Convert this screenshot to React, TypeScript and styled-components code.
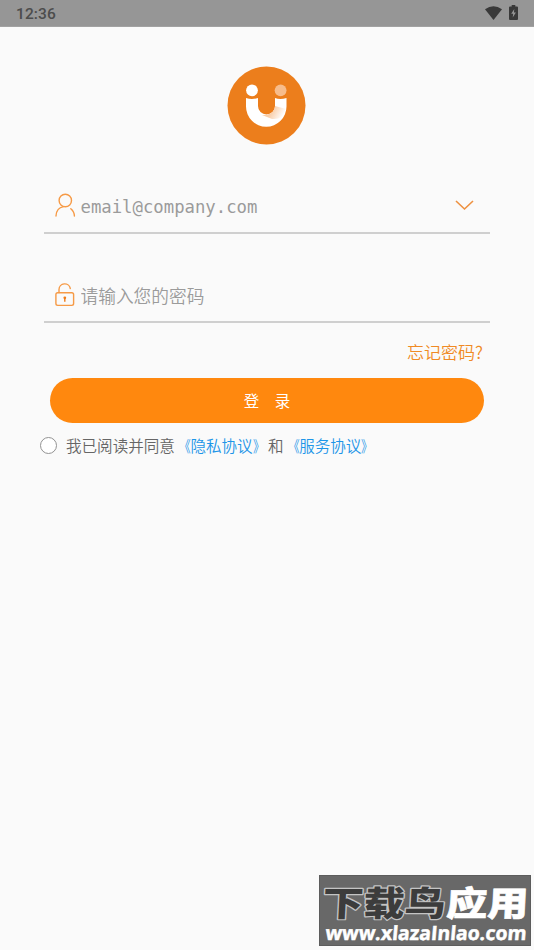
import React from 'react';
import styled, { createGlobalStyle } from 'styled-components';

const GlobalStyle = createGlobalStyle`
  * { box-sizing: border-box; }
  body { margin: 0; background: #fafafa; }
`;

const Screen = styled.div`
  position: relative;
  width: 534px;
  height: 950px;
  overflow: hidden;
  display: flex;
  flex-direction: column;
  background: #fafafa;
  font-family: 'Noto Sans CJK SC', sans-serif;
`;

const StatusBar = styled.header`
  height: 27px;
  flex: none;
  display: flex;
  align-items: center;
  justify-content: space-between;
  padding: 1px 16px 0 16px;
  background: #969696;
  border-bottom: 1px solid #a2a2a2;
`;

const Clock = styled.span`
  font: 500 15.5px/20px Roboto, sans-serif;
  letter-spacing: 0.1px;
  color: #4c4c4c;
`;

const StatusIcons = styled.div`
  display: flex;
  align-items: center;
  gap: 7px;
  margin-top: -2px;
  svg { display: block; }
`;

const LogoWrap = styled.div`
  display: flex;
  justify-content: center;
  height: 151px;
  padding: 39px 1px 0 0;
  svg { display: block; }
`;

const Field = styled.label<{ $height: number }>`
  display: flex;
  align-items: flex-end;
  height: ${(p) => p.$height}px;
  margin: 0 44px;
  padding: 0 16px 12px 10px;
  border-bottom: 2px solid #cfcfcf;
  svg { display: block; flex: none; }
`;

const Input = styled.input<{ $mono?: boolean }>`
  flex: 1;
  min-width: 0;
  height: 24px;
  margin: 0 0 ${(p) => (p.$mono ? 1 : 2)}px 3.500px;
  padding: 0;
  border: 0;
  outline: 0;
  background: transparent;
  font-family: ${(p) => (p.$mono ? "'DejaVu Sans Mono', monospace" : "'Noto Sans CJK SC', sans-serif")};
  font-size: ${(p) => (p.$mono ? 17.3 : 17.7)}px;
  font-weight: ${(p) => (p.$mono ? 400 : 350)};
  color: #666;
  &::placeholder { color: #9b9b9b; opacity: 1; }
`;

const Forgot = styled.a`
  align-self: flex-end;
  margin: 16px 51px 0 0;
  height: 39px;
  font-size: 17px;
  font-weight: 350;
  line-height: 26px;
  color: #f08a24;
`;

const LoginButton = styled.button`
  flex: none;
  height: 45px;
  margin: 0 50px 0 50px;
  padding: 0;
  border: 0;
  border-radius: 23px;
  background: #ff880e;
  color: #fff;
  font: 400 15.5px/45px 'Noto Sans CJK SC', sans-serif;
`;

const Agreement = styled.div`
  display: flex;
  align-items: center;
  height: 44px;
  padding-left: 40px;
`;

const Radio = styled.span`
  width: 17px;
  height: 17px;
  margin-right: 9px;
  border: 1px solid #929292;
  border-radius: 50%;
  background: #fff;
`;

const AgreementText = styled.span`
  font-size: 15.55px;
  font-weight: 350;
  line-height: 24px;
  white-space: nowrap;
  color: #666;
`;

const Link = styled.a`
  color: #1e96e8;
`;

const Bracket = styled.span<{ $side: 'left' | 'right' }>`
  display: inline-block;
  transform: scaleX(0.75);
  transform-origin: ${(p) => (p.$side === 'left' ? 'right' : 'left')} center;
`;

const Watermark = styled.div`
  position: absolute;
  left: 319px;
  top: 875px;
  width: 212px;
  height: 71px;
  background: #686868;
  border: 1px solid #5c5c5c;
  svg { display: block; }
`;

const Logo = () => (
  <svg width="79" height="79" viewBox="0 0 79 79">
    <defs>
      <linearGradient id="fold" x1="44" y1="46" x2="55" y2="52" gradientUnits="userSpaceOnUse">
        <stop offset="0" stopColor="#f8cda8" />
        <stop offset="1" stopColor="#fff" />
      </linearGradient>
      <clipPath id="smile">
        <path d="M19 32Q25 34 31 32V40A8.500 8.500 0 0 0 48 40V32Q53 34 59.500 32V40.500A20.250 20.250 0 0 1 19 40.500Z" />
      </clipPath>
    </defs>
    <circle cx="39.5" cy="39.5" r="39" fill="#ec7e1c" />
    <circle cx="25" cy="24.3" r="5.9" fill="#fff" />
    <circle cx="53.6" cy="24.3" r="5.9" fill="#f7bc8b" />
    <g clipPath="url(#smile)">
      <rect x="18" y="30" width="43" height="33" fill="#fff" />
      <path d="M35 49Q45 50 48 40L59 43Q56 54 45 53Z" fill="url(#fold)" />
    </g>
  </svg>
);

const Wifi = () => (
  <svg width="17" height="14" viewBox="0 0 17 14">
    <path d="M0 3.3Q8.500-3 17 3.300L8.500 14Z" fill="#393939" />
  </svg>
);

const Battery = () => (
  <svg width="9" height="15" viewBox="0 0 9 15">
    <path d="M2.700 0H6.300V1.500H8Q9 1.500 9 2.500V14Q9 15 8 15H1Q0 15 0 14V2.500Q0 1.500 1 1.500H2.700Z" fill="#393939" />
    <path d="M5.300 4L2.200 8.800H4.200L3.700 12.500L6.900 7.600H4.900Z" fill="#969696" />
  </svg>
);

const User = () => (
  <svg width="23" height="27" viewBox="0 0 23 27" fill="none" stroke="#f69a46" strokeWidth="1.400" strokeLinecap="round">
    <circle cx="11.300" cy="7.500" r="6.200" />
    <path d="M2 23C2.200 17.500 5.500 14.300 9.500 13.600M16.800 15.800C19 17.600 20.300 20 20.400 23" />
  </svg>
);

const Lock = () => (
  <svg width="23" height="27" viewBox="0 0 23 27" fill="none" stroke="#f69a46" strokeWidth="1.400">
    <rect x="1.900" y="10.800" width="17.700" height="12.600" rx="1.800" />
    <path d="M5 10.500V7.500A5.700 5.700 0 0 1 16.300 6.500" strokeLinecap="round" />
    <circle cx="10.800" cy="15.800" r="1.400" fill="#f07c18" stroke="none" />
    <path d="M10.800 16V19.800" stroke="#f07c18" />
  </svg>
);

const Chevron = () => (
  <svg width="19" height="21" viewBox="0 0 19 21">
    <path d="M1 2L9.500 10L18 2" fill="none" stroke="#ee9140" strokeWidth="1.600" />
  </svg>
);

const WatermarkMark = () => (
  <svg width="210" height="69" viewBox="0 0 210 69">
    <g
      fontFamily="'Noto Sans CJK SC', sans-serif"
      fontWeight="900"
      fontSize="34.500"
      strokeLinejoin="round"
      transform="translate(2 39.500) skewX(-3) scale(1.190 1)"
    >
      <text x="0" y="0" fill="#3c3c3c" stroke="#c4c4c4" strokeWidth="2.400" paintOrder="stroke">下载鸟</text>
      <text x="104" y="0" fill="#fff" stroke="#fff" strokeWidth="0.600">应用</text>
    </g>
    <text
      x="0"
      y="0"
      transform="translate(5 63.500) skewX(-5)"
      textLength="201"
      lengthAdjust="spacingAndGlyphs"
      fill="#fff"
      stroke="#fff"
      strokeWidth="0.500"
      fontFamily="'Open Sans', sans-serif"
      fontWeight="700"
      fontSize="19.500"
    >
      www.xlazaInlao.com
    </text>
  </svg>
);

export default function App() {
  return (
    <>
      <GlobalStyle />
      <Screen>
        <StatusBar>
          <Clock>12:36</Clock>
          <StatusIcons>
            <Wifi />
            <Battery />
          </StatusIcons>
        </StatusBar>
        <LogoWrap>
          <Logo />
        </LogoWrap>
        <Field $height={56}>
          <User />
          <Input $mono placeholder="email@company.com" />
          <Chevron />
        </Field>
        <Field $height={89}>
          <Lock />
          <Input type="password" placeholder="请输入您的密码" />
        </Field>
        <Forgot>忘记密码?</Forgot>
        <LoginButton>登　录</LoginButton>
        <Agreement>
          <Radio />
          <AgreementText>
            我已阅读并同意
            <Link><Bracket $side="left">《</Bracket>隐私协议<Bracket $side="right">》</Bracket></Link>
            和
            <Link><Bracket $side="left">《</Bracket>服务协议<Bracket $side="right">》</Bracket></Link>
          </AgreementText>
        </Agreement>
        <Watermark>
          <WatermarkMark />
        </Watermark>
      </Screen>
    </>
  );
}
